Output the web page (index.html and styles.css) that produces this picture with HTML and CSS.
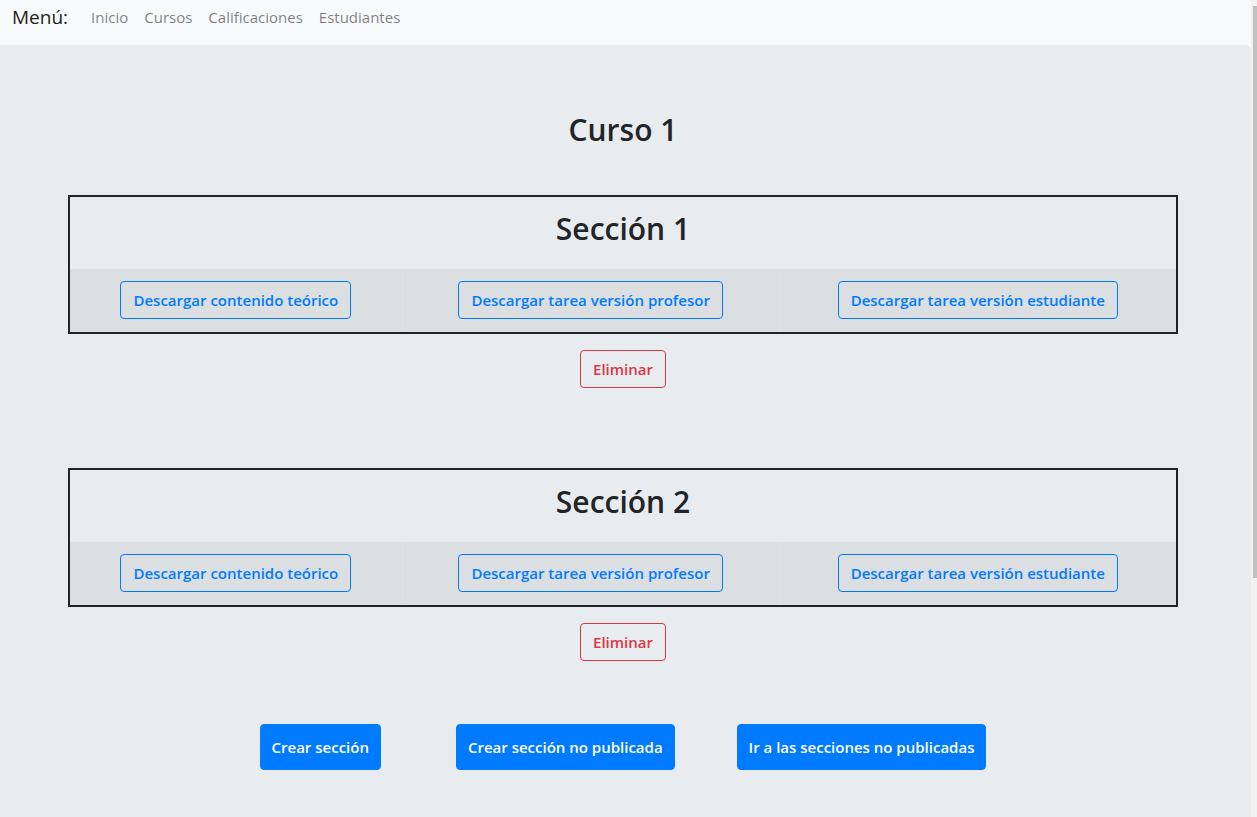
FILE: index.html
```html
<!DOCTYPE html>
<html lang="es">
<head>
<meta charset="utf-8">
<title>Curso 1</title>
<link rel="stylesheet" href="styles.css">
</head>
<body>
<nav class="navbar">
  <span class="brand">Menú:</span>
  <a class="nav-link link-inicio" href="#">Inicio</a>
  <a class="nav-link" href="#">Cursos</a>
  <a class="nav-link" href="#">Calificaciones</a>
  <a class="nav-link" href="#">Estudiantes</a>
</nav>
<main class="jumbotron">
  <h2 class="title">Curso 1</h2>

  <table class="sec">
    <tr><th colspan="3"><h2 class="sec-title">Sección 1</h2></th></tr>
    <tr class="btn-row">
      <td><button class="btn btn-outline-primary">Descargar contenido teórico</button></td>
      <td><button class="btn btn-outline-primary">Descargar tarea versión profesor</button></td>
      <td><button class="btn btn-outline-primary">Descargar tarea versión estudiante</button></td>
    </tr>
  </table>
  <div class="del-row"><button class="btn btn-outline-danger">Eliminar</button></div>

  <table class="sec sec-next">
    <tr><th colspan="3"><h2 class="sec-title">Sección 2</h2></th></tr>
    <tr class="btn-row">
      <td><button class="btn btn-outline-primary">Descargar contenido teórico</button></td>
      <td><button class="btn btn-outline-primary">Descargar tarea versión profesor</button></td>
      <td><button class="btn btn-outline-primary">Descargar tarea versión estudiante</button></td>
    </tr>
  </table>
  <div class="del-row"><button class="btn btn-outline-danger">Eliminar</button></div>

  <div class="actions">
    <button class="btn btn-primary">Crear sección</button>
    <button class="btn btn-primary act-2">Crear sección no publicada</button>
    <button class="btn btn-primary act-3">Ir a las secciones no publicadas</button>
  </div>
</main>
<div class="scroll-thumb"></div>
</body>
</html>
```

FILE: styles.css
```css
html {
  background: #f1f1f1;
}
body {
  margin: 0;
  width: 1251px;
  height: 817px;
  overflow: hidden;
  font-family: "Open Sans", "Noto Sans", sans-serif;
  color: #212529;
  background: #ffffff;
}
.navbar {
  display: flex;
  align-items: center;
  height: 30px;
  padding: 2px 0 13px 12px;
  background: #f8f9fa;
}
.brand {
  font-size: 19px;
  line-height: 30px;
  color: rgba(0, 0, 0, 0.9);
  margin-right: 15px;
}
.nav-link {
  font-size: 15px;
  line-height: 24px;
  padding: 0 8px;
  color: rgba(0, 0, 0, 0.5);
  text-decoration: none;
}
.jumbotron {
  background: #e9ecef;
  border-top-right-radius: 5px;
  padding: 66px 73px 64px 68px;
  height: 642px;
}
.title {
  margin: 0 0 46px;
  text-align: center;
  font-size: 30px;
  line-height: 38px;
  font-weight: 600;
}
.sec {
  width: 100%;
  border: 2px solid #212529;
  border-spacing: 0;
  border-collapse: separate;
}
.sec th {
  padding: 12px 12px 20px;
  text-align: center;
  border-bottom: 1px solid #e9ecef;
}
.sec-title {
  margin: 0;
  font-size: 30px;
  line-height: 39px;
  font-weight: 600;
}
.btn-row td {
  background: #dcdfe2;
  padding: 12px 12px 13px;
  text-align: center;
  border-left: 1px solid #e0e3e6;
}
.btn-row td:first-child {
  border-left: 0;
}
.btn {
  font-family: inherit;
  font-size: 15px;
  line-height: 24px;
  padding: 6px 12px;
  border-radius: 4px;
  border: 1px solid transparent;
  background: transparent;
  cursor: pointer;
  font-weight: 600;
}
.btn-outline-primary {
  color: #007bff;
  border-color: #007bff;
}
.btn-outline-danger {
  color: #dc3545;
  border-color: #dc3545;
}
.btn-primary {
  color: #ffffff;
  background: #007bff;
  border-color: #007bff;
  font-weight: 600;
  padding: 10px 11px;
}
.del-row {
  display: flex;
  justify-content: center;
  margin-top: 16px;
}
.sec-next {
  margin-top: 80px;
}
.actions {
  display: flex;
  justify-content: center;
  margin-top: 63px;
}
.act-2 {
  margin-left: 75px;
}
.act-3 {
  margin-left: 62px;
}
.scroll-thumb {
  position: fixed;
  right: 0;
  top: 6px;
  width: 4px;
  height: 572px;
  background: #c1c1c1;
}
```
